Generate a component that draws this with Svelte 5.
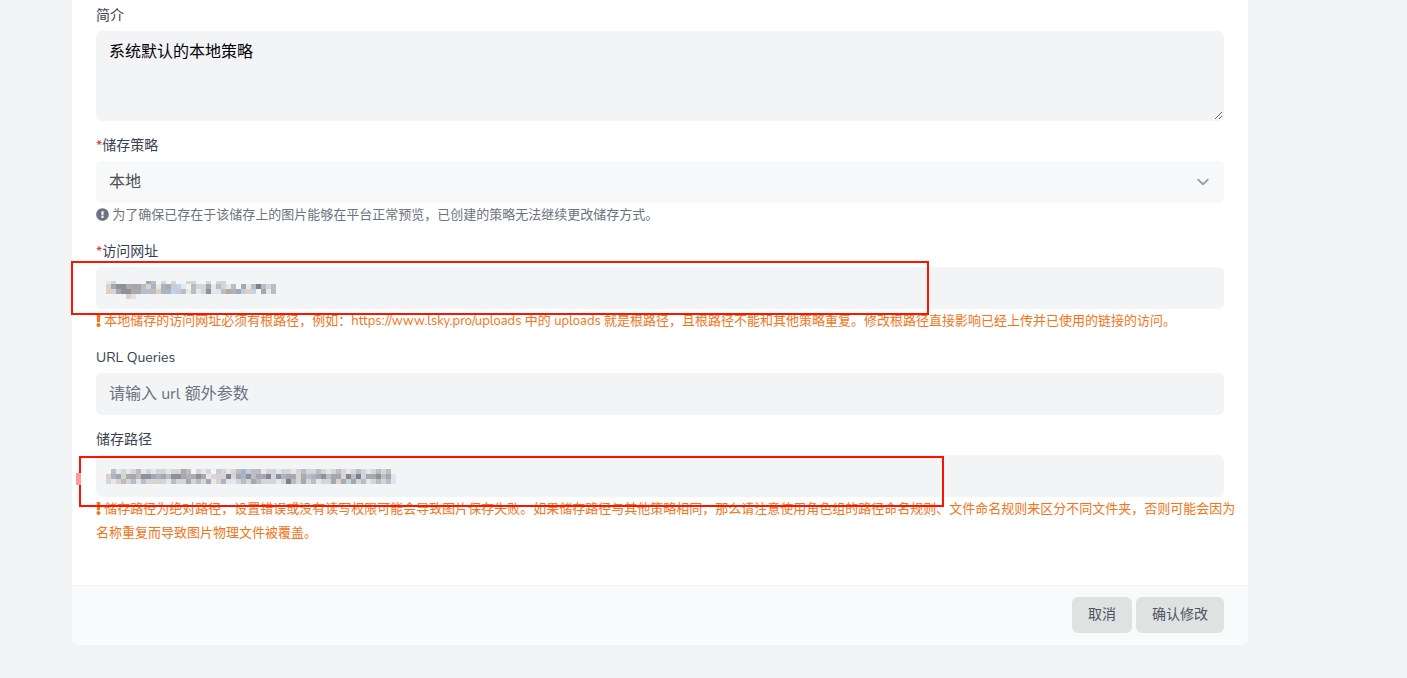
<script>
    let intro = "系统默认的本地策略";
    let driver = "local";
    let url = "";
    let queries = "";
    let root = "";

    // Colours of the masked value tiles, one letter for each tile
    const palette = {
        a: "#e6e7ea",
        b: "#d3d5d9",
        c: "#bbbdc3",
        d: "#a5a8ae",
        e: "#8e9197",
        f: "#c3ccda",
        g: "#a9b4c6",
        h: "#e0cfc4",
        i: "#b5a8a0",
        j: "#bed3e8",
        k: "#dbe6f0",
        l: "#8b8490",
        m: "#f0e6da",
        n: "#75838d"
    };

    const urlTiles = [
        { y: 0, h: 3, row: "ab......dc.b.b..bb..b.bb..........b" },
        { y: 3, h: 5, row: "hdeeiddcbgmgifja.cbbdacbac.dacncbcc" },
        { y: 8, h: 5, row: "hbdeeidccchggjfcacabeakcigdfhj.dacc" },
        { y: 13, h: 5, row: "....hk............................" }
    ].map((line) => ({ ...line, row: line.row.slice(0, 34) }));
    const rootTiles = [
        { y: 0, h: 5, row: ".cababcababbabbic.bab.fbabcgfccabbabbabcbbcbabcbabcbabcbc" },
        { y: 5, h: 5, row: "hgdbidceedgdceedgiedabhblbdgecddlbegddbicgdecddblcnbddecdk" },
        { y: 10, h: 5, row: "bahcbckcbbhbacbbdbcbdahgkabcbdcbbbabncbdbcabbdbijdbcabcbck" }
    ];
</script>

<div class="page">
    <form class="card" on:submit|preventDefault>
        <div class="fields">
            <div class="field">
                <label for="intro">简介</label>
                <textarea id="intro" rows="3" bind:value={intro}></textarea>
            </div>

            <div class="field">
                <label for="driver"><span class="required">*</span>储存策略</label>
                <div class="control">
                    <select id="driver" disabled bind:value={driver}>
                        <option value="local">本地</option>
                    </select>
                    <svg class="chevron" viewBox="0 0 20 20" fill="none" stroke="#6b7280" stroke-width="1.5" stroke-linecap="round" stroke-linejoin="round">
                        <path d="M6 8l4 4 4-4" />
                    </svg>
                </div>
                <p class="hint">
                    <svg class="circle" viewBox="0 0 512 512" fill="currentColor">
                        <path d="M504 256c0 137-111 248-248 248S8 393 8 256 119 8 256 8s248 111 248 248zm-248 50c-25.400 0-46 20.600-46 46s20.600 46 46 46 46-20.600 46-46-20.600-46-46-46zm-43.700-165.300l7.400 136c.3 6.400 5.600 11.300 12 11.300h48.500c6.400 0 11.600-5 12-11.300l7.400-136c.4-6.900-5.100-12.700-12-12.700h-63.400c-6.900 0-12.300 5.800-11.900 12.700z" />
                    </svg>
                    为了确保已存在于该储存上的图片能够在平台正常预览，已创建的策略无法继续更改储存方式。
                </p>
            </div>

            <div class="field">
                <label for="url"><span class="required">*</span>访问网址</label>
                <div class="control">
                    <input id="url" type="text" bind:value={url}>
                    <svg class="mask" width="170" height="18" shape-rendering="crispEdges">
                        {#each urlTiles as line}
                            {#each line.row.split("") as tile, i}
                                {#if tile !== "."}
                                    <rect x={i * 5} y={line.y} width="5" height={line.h} fill={palette[tile]} />
                                {/if}
                            {/each}
                        {/each}
                    </svg>
                    <div class="mark mark-url"></div>
                </div>
                <p class="hint warning">
                    <svg class="bang" viewBox="0 0 192 512" fill="currentColor">
                        <path d="M176 432c0 44-36 80-80 80s-80-36-80-80 36-80 80-80 80 36 80 80zM25.300 25.200l13.600 272c.6 12.800 11.200 22.800 24 22.800h66.300c12.800 0 23.300-10 24-22.800l13.600-272C167.400 11.500 156.500 0 142.800 0H49.200C35.500 0 24.600 11.500 25.300 25.200z" />
                    </svg>
                    本地储存的访问网址必须有根路径，例如：https://www.lsky.pro/uploads 中的 uploads 就是根路径，且根路径不能和其他策略重复。修改根路径直接影响已经上传并已使用的链接的访问。
                </p>
            </div>

            <div class="field">
                <label for="queries">URL Queries</label>
                <input id="queries" type="text" placeholder="请输入 url 额外参数" bind:value={queries}>
            </div>

            <div class="field">
                <label for="root">储存路径</label>
                <div class="control">
                    <input id="root" type="text" bind:value={root}>
                    <svg class="mask" width="290" height="15" shape-rendering="crispEdges">
                        {#each rootTiles as line}
                            {#each line.row.split("") as tile, i}
                                {#if tile !== "."}
                                    <rect x={i * 5} y={line.y} width="5" height={line.h} fill={palette[tile]} />
                                {/if}
                            {/each}
                        {/each}
                    </svg>
                    <div class="mark mark-root"></div>
                    <div class="smudge"></div>
                </div>
                <p class="hint warning">
                    <svg class="bang" viewBox="0 0 192 512" fill="currentColor">
                        <path d="M176 432c0 44-36 80-80 80s-80-36-80-80 36-80 80-80 80 36 80 80zM25.300 25.200l13.600 272c.6 12.800 11.200 22.800 24 22.800h66.300c12.800 0 23.300-10 24-22.800l13.600-272C167.400 11.500 156.500 0 142.800 0H49.200C35.500 0 24.600 11.500 25.300 25.200z" />
                    </svg>
                    储存路径为绝对路径，设置错误或没有读写权限可能会导致图片保存失败。如果储存路径与其他策略相同，那么请注意使用角色组的路径命名规则、文件命名规则来区分不同文件夹，否则可能会因为名称重复而导致图片物理文件被覆盖。
                </p>
            </div>
        </div>

        <div class="actions">
            <button type="button">取消</button>
            <button type="submit">确认修改</button>
        </div>
    </form>
</div>

<style>
    :global(body) {
        background-color: #f2f3f5;
        font-family: Nunito, Lato, "Noto Sans CJK SC", sans-serif;
    }

    .page {
        padding: 0 159px 32px 72px;
    }

    .card {
        background-color: #fff;
        border-radius: 0 0 6px 6px;
    }

    .fields {
        display: flex;
        flex-direction: column;
        gap: 15px;
        padding: 6px 24px 40px;
    }

    .field {
        display: flex;
        flex-direction: column;
    }

    label {
        margin-bottom: 5px;
        font-size: 14px;
        line-height: 20px;
        color: #374151;
    }

    .required {
        color: #dc2626;
    }

    .control {
        position: relative;
    }

    input, textarea, select {
        display: block;
        box-sizing: border-box;
        width: 100%;
        margin: 0;
        padding: 8px 12px;
        border: 1px solid transparent;
        border-radius: 6px;
        background-color: #f3f4f6;
        color: #000;
        font-family: inherit;
        font-size: 16px;
        line-height: 24px;
    }

    input, select {
        height: 42px;
    }

    textarea {
        height: 90px;
        resize: vertical;
    }

    input::placeholder {
        color: #6b7280;
    }

    select {
        appearance: none;
        background-color: #f7f8fa;
        color: #4c4d4f;
        opacity: 1;
    }

    .chevron {
        position: absolute;
        top: 9px;
        right: 9px;
        width: 24px;
        height: 24px;
        opacity: 0.7;
    }

    .hint {
        margin: 0;
        font-size: 13px;
        line-height: 24px;
        color: #6b7280;
    }

    .warning {
        margin-right: -16px;
        color: #f97316;
    }

    .circle, .bang {
        height: 13px;
        vertical-align: -2px;
    }

    .circle {
        width: 13px;
    }

    .bang {
        width: 5px;
    }

    .mask {
        position: absolute;
        left: 10px;
        top: 14px;
    }

    .mark {
        position: absolute;
        box-sizing: border-box;
        border: 2px solid #ff1200;
        pointer-events: none;
    }

    .mark-url {
        top: -6px;
        left: -25px;
        width: 858px;
        height: 54px;
    }

    .mark-root {
        top: 1px;
        left: -17px;
        width: 865px;
        height: 51px;
    }

    .smudge {
        position: absolute;
        top: 18px;
        left: -20px;
        width: 5px;
        height: 12px;
        background-color: #ff9c98;
    }

    .actions {
        display: flex;
        justify-content: flex-end;
        gap: 4px;
        padding: 11px 24px 12px;
        border-top: 1px solid #f3f4f6;
        border-radius: 0 0 6px 6px;
        background-color: #f9fafb;
    }

    button {
        padding: 8px 16px;
        border: none;
        border-radius: 6px;
        background-color: #dfe2e1;
        color: #4b5563;
        font-family: inherit;
        font-size: 14px;
        line-height: 20px;
        cursor: pointer;
    }

    button:hover {
        background-color: #d1d5db;
    }
</style>
